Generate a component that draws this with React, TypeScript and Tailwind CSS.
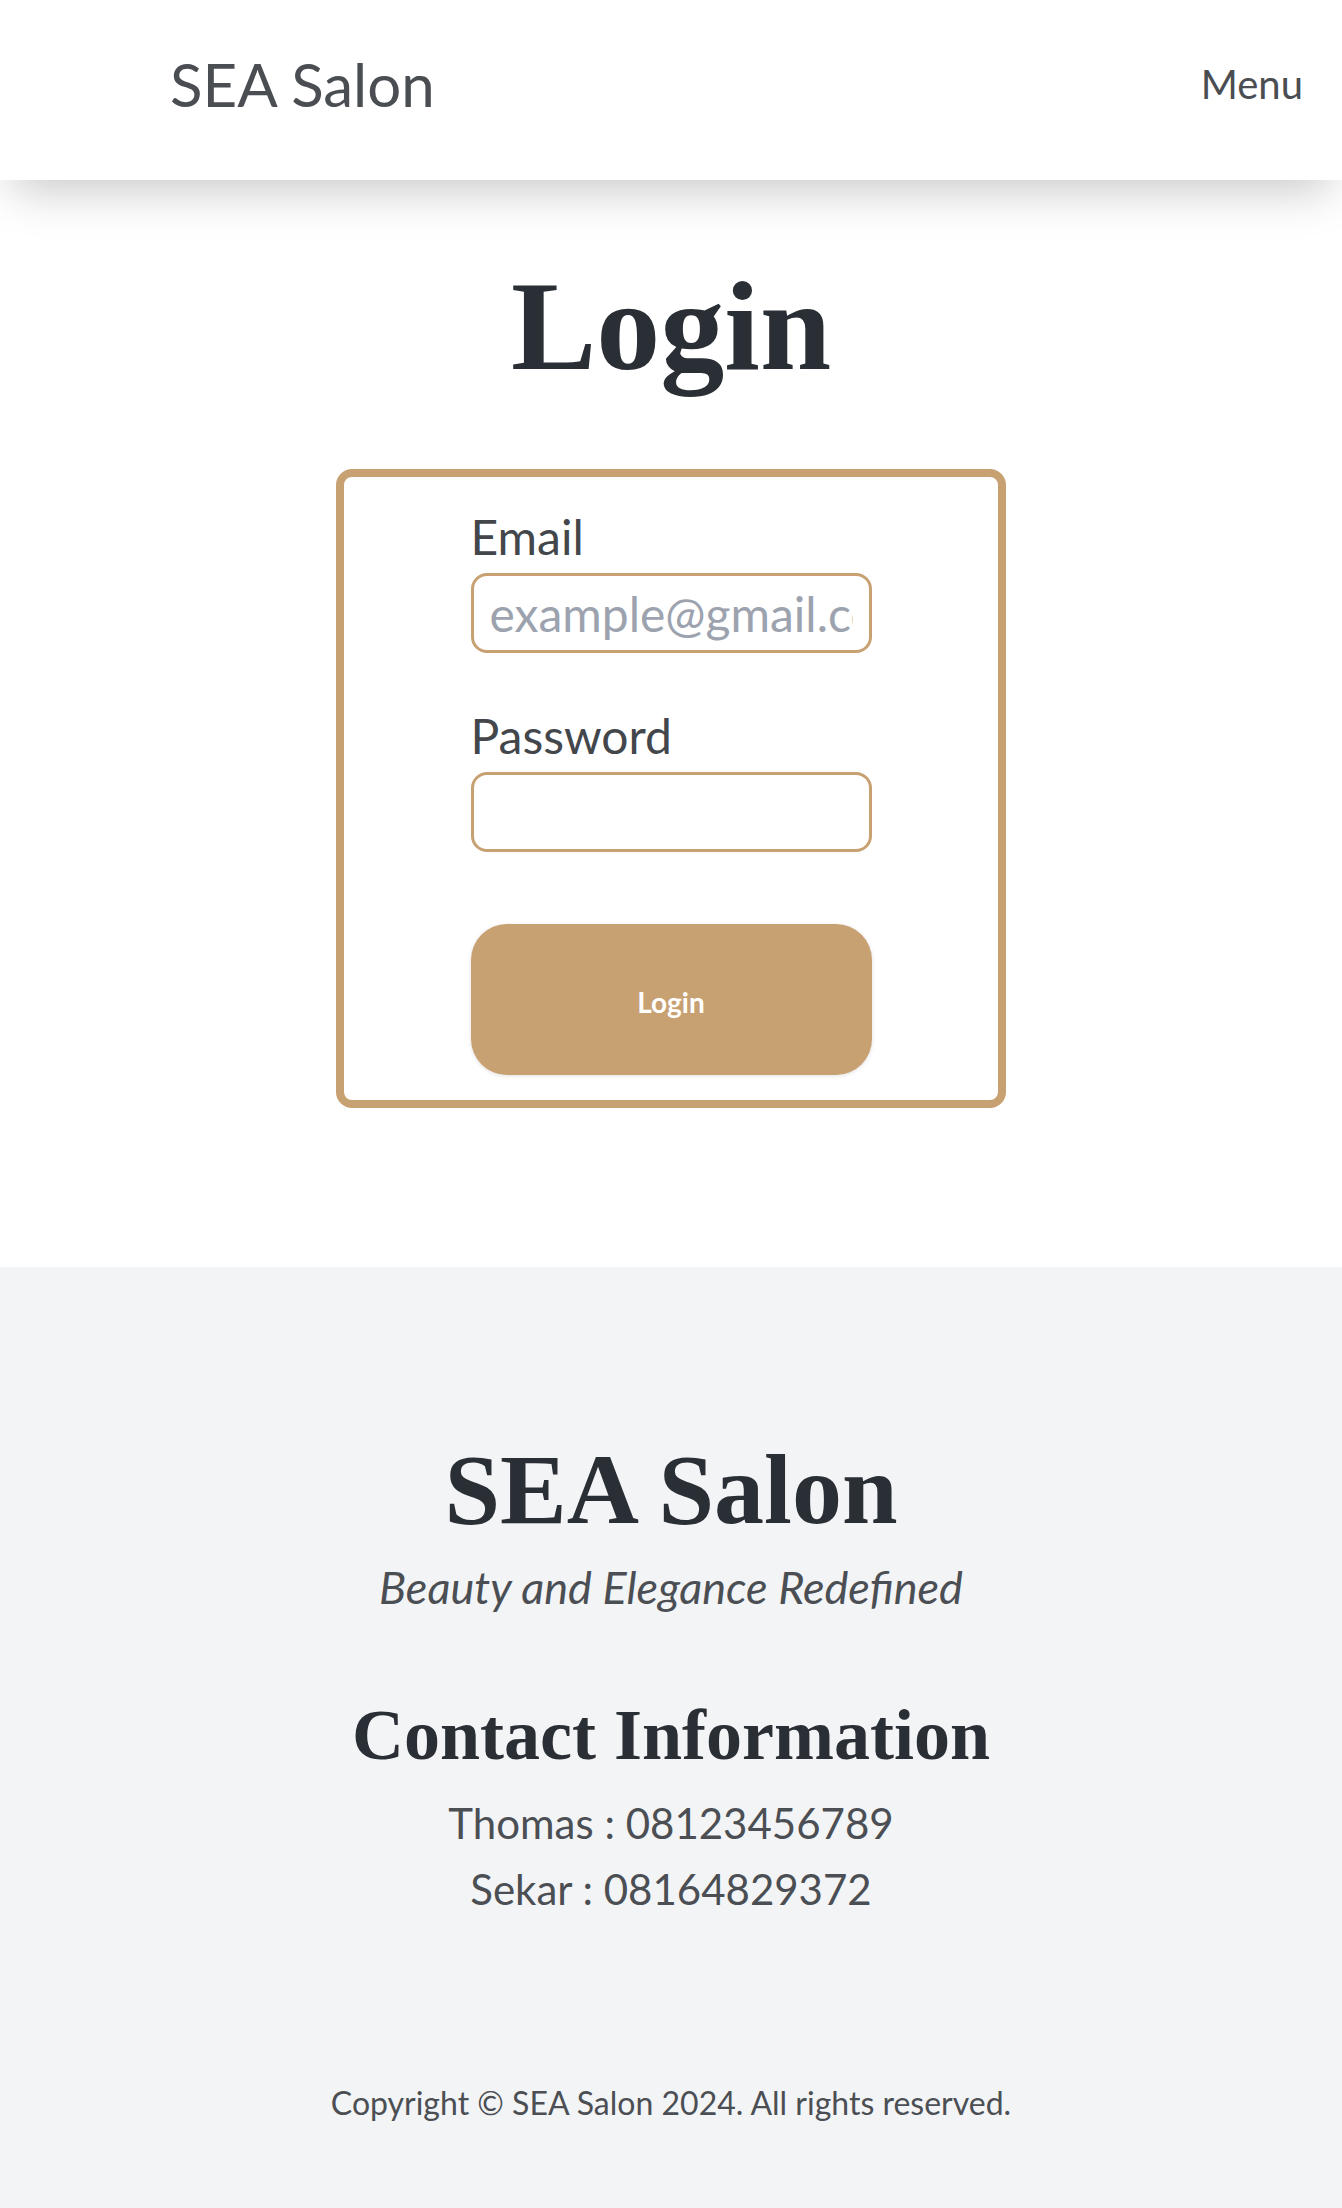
const sans = "font-['Lato','Open_Sans',sans-serif]";
const serif = "font-['Liberation_Serif','Times_New_Roman',serif]";

function Header() {
  return (
    <header className="relative z-10 flex h-[180px] items-center justify-between bg-white pb-[12px] pl-[170px] pr-[39px] shadow-[0_22px_44px_-12px_rgba(0,0,0,0.22)]">
      <span className={`${sans} text-[60px] leading-none text-[#4a4d51]`}>SEA Salon</span>
      <button className={`${sans} text-[40px] leading-none text-[#4a4d51]`}>Menu</button>
    </header>
  );
}

function Field({ label, type, placeholder, first }: { label: string; type: string; placeholder?: string; first?: boolean }) {
  return (
    <div className={first ? "" : "mt-[51px]"}>
      <label className={`${sans} block text-[48px] leading-[64px] text-[#43474c]`}>{label}</label>
      <input
        type={type}
        placeholder={placeholder}
        className={`${sans} mt-[4px] block h-[80px] w-full rounded-[16px] border-[3px] border-[#c8a173] bg-white px-[16px] text-[48px] text-[#43474c] outline-none placeholder:text-[#9ca3af]`}
      />
    </div>
  );
}

function LoginCard() {
  return (
    <div className="mx-auto mt-[79px] w-[670px] rounded-[16px] border-[8px] border-[#c8a173] pb-[25px] pt-[28px]">
      <form className="mx-auto w-[401px]">
        <Field label="Email" type="email" placeholder="example@gmail.com" first />
        <Field label="Password" type="password" />
        <button
          type="button"
          className={`${sans} mt-[72px] flex h-[151px] w-full items-center justify-center rounded-[36px] bg-[#c8a173] pt-[4px] text-[28px] font-bold text-white shadow-[0_1px_4px_rgba(0,0,0,0.12)]`}
        >
          Login
        </button>
      </form>
    </div>
  );
}

function Footer() {
  return (
    <footer className="flex flex-col items-center bg-[#f3f4f6] pb-[89px] pt-[173px] text-center">
      <h2 className={`${serif} text-[100px] font-bold leading-none text-[#2a2e35]`}>SEA Salon</h2>
      <p className={`${sans} mt-[25px] text-[45px] italic leading-none text-[#4b4f54]`}>Beauty and Elegance Redefined</p>
      <h3 className={`${serif} mt-[89px] text-[72px] font-bold leading-none text-[#2a2e35]`}>Contact Information</h3>
      <p className={`${sans} mt-[31px] text-[42px] leading-none text-[#4b4f54]`}>Thomas : 08123456789</p>
      <p className={`${sans} mt-[24px] text-[42px] leading-none text-[#4b4f54]`}>Sekar : 08164829372</p>
      <p className={`${sans} mt-[177px] text-[32px] leading-none text-[#4b4f54]`}>
        Copyright © SEA Salon 2024. All rights reserved.
      </p>
    </footer>
  );
}

export default function App() {
  return (
    <div className="min-h-screen w-[1342px] bg-white">
      <Header />
      <main className="pb-[159px]">
        <h1 className={`${serif} mt-[82px] text-center text-[128px] font-bold leading-none text-[#2a2e35]`}>Login</h1>
        <LoginCard />
      </main>
      <Footer />
    </div>
  );
}
